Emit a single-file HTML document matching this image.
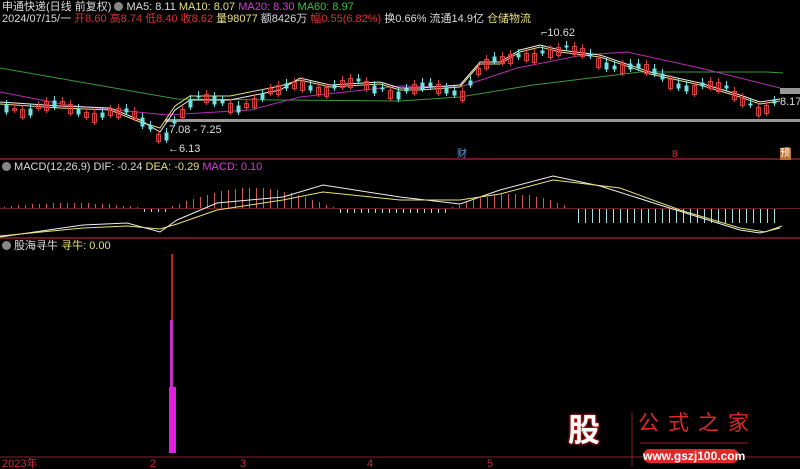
<!DOCTYPE html>
<html><head><meta charset="utf-8">
<style>
html,body{margin:0;padding:0;background:#000;width:800px;height:469px;overflow:hidden}
body{position:relative;font-family:"Liberation Sans","Noto Sans CJK SC",sans-serif;font-size:11px;color:#ccc}
.t{position:absolute;white-space:nowrap;line-height:12px}
svg{position:absolute;left:0;top:0}
line,rect{shape-rendering:crispEdges}
</style></head><body>
<svg id="s" width="800" height="469" viewBox="0 0 800 469"></svg>
<div class="t" style="left:2px;top:1px;color:#ddd">申通快递(日线 前复权) <span style="display:inline-block;width:9px;height:9px;border-radius:50%;background:#888;vertical-align:-1px"></span> MA5: 8.11 <span style="color:#e8e07a">MA10: 8.07</span> <span style="color:#d040d0">MA20: 8.30</span> <span style="color:#3ec03e">MA60: 8.97</span></div>
<div class="t" style="left:2px;top:13px;color:#ddd">2024/07/15/一 <span style="color:#e03030">开</span><span style="color:#e03030">8.60</span> <span style="color:#e03030">高8.74</span> <span style="color:#e03030">低8.40</span> <span style="color:#e03030">收8.62</span> <span style="color:#e8e07a">量98077</span> 额8426万 <span style="color:#e03030">幅0.55(6.82%)</span> 换0.66% 流通14.9亿 <span style="color:#e8e07a">仓储物流</span></div>
<div class="t" style="left:169px;top:124px;color:#ddd">7.08 - 7.25</div>
<div class="t" style="left:168px;top:143px;color:#ddd">←6.13</div>
<div class="t" style="left:541px;top:27px;color:#ddd">⌐10.62</div>
<div class="t" style="left:780px;top:96px;color:#ddd">8.17</div>
<div class="t" style="left:457px;top:149px;color:#5aa0e0;font-size:10px">财</div>
<div class="t" style="left:672px;top:149px;color:#e03030;font-size:10px">8</div>
<div class="t" style="left:780px;top:148px;width:11px;color:#fff;background:#c07030;font-size:10px">预</div>
<div class="t" style="left:2px;top:161px;color:#ddd"><span style="display:inline-block;width:9px;height:9px;border-radius:50%;background:#888;vertical-align:-1px"></span> MACD(12,26,9) DIF: -0.24 <span style="color:#e8e07a">DEA: -0.29</span> <span style="color:#d040d0">MACD: 0.10</span></div>
<div class="t" style="left:2px;top:240px;color:#ddd"><span style="display:inline-block;width:9px;height:9px;border-radius:50%;background:#888;vertical-align:-1px"></span> 股海寻牛 <span style="color:#e8e07a">寻牛: 0.00</span></div>
<div class="t" style="left:2px;top:458px;color:#c03040">2023年</div>
<div class="t" style="left:150px;top:458px;color:#c03040">2</div>
<div class="t" style="left:240px;top:458px;color:#c03040">3</div>
<div class="t" style="left:367px;top:458px;color:#c03040">4</div>
<div class="t" style="left:487px;top:458px;color:#c03040">5</div>
<div class="t" style="left:568px;top:412px;width:40px;height:36px;font-size:32px;line-height:36px;font-weight:bold;color:#fff;text-shadow:0 0 3px #e02020,0 0 2px #e02020">股</div>
<div class="t" style="left:638px;top:412px;font-size:21px;line-height:24px;color:#e02828;letter-spacing:9px">公式之家</div>
<div class="t" style="left:643px;top:449px;width:96px;height:14px;border-radius:7px;background:#e02828;color:#fff;font-size:12px;line-height:14px;font-weight:bold;text-align:center">www.gszj100.com</div>
<script>
var s=document.getElementById('s'),h='';
function L(x1,y1,x2,y2,c,w){h+='<line x1="'+x1+'" y1="'+y1+'" x2="'+x2+'" y2="'+y2+'" stroke="'+c+'" stroke-width="'+(w||1)+'"/>';}
function P(pts,c){h+='<polyline fill="none" stroke="'+c+'" stroke-width="1" points="'+pts+'"/>';}
function R(x,y,w,hh,c,f){h+='<rect x="'+x+'" y="'+y+'" width="'+w+'" height="'+hh+'" '+(f?'fill="'+c+'"':'fill="none" stroke="'+c+'"')+'/>';}
L(0,159,800,159,'#6a1820',2);L(0,238,800,238,'#6a1820',2);L(0,457,800,457,'#8a2030',1);
R(165,119,635,3,'#999',1);R(780,88,20,6,'#999',1);
P('0,68 177,99 400,101 460,97 533,85 640,72 767,72 783,73','#3a9a3a');
P('0,92 67,105 167,115 250,110 300,97 400,86 460,87 517,68 583,55 627,52 700,68 780,88','#b030b0');
var pr=[[0,102],[60,106],[110,108],[140,120],[160,132],[175,110],[190,100],[230,100],[280,90],[300,78],[330,85],[380,82],[400,88],[420,88],[460,85],[480,62],[500,62],[520,50],[540,45],[560,50],[600,55],[650,72],[700,83],[740,95],[760,102],[780,99]];
P(pr.map(function(p,i){return p[0]+','+(p[1]+(i>3&&i<9?-6:0)+2)}).join(' '),'#e8e07a');
P(pr.map(function(p){return p[0]+','+p[1]}).join(' '),'#eee');
function py(x){for(var i=1;i<pr.length;i++){if(x<=pr[i][0]){var a=pr[i-1],b=pr[i];return a[1]+(b[1]-a[1])*(x-a[0])/(b[0]-a[0]);}}return 99;}
for(var x=4;x<780;x+=8){var y=Math.round(py(x)+(Math.sin(x*0.7)*6)),up=Math.sin(x*1.3)>0,c=up?'#d04040':'#70e0e0',bh=Math.round(2+Math.abs(Math.sin(x*2.1))*7);L(x+2.5,y-4,x+2.5,y+bh+3,c);R(x+0.5,y+0.5,4,bh,c,!up);}
for(var x=4;x<780;x+=7){var v;if(x<140)v=-4*Math.sin(x/140*Math.PI)-1;else if(x<168)v=4;else if(x<335)v=-20*Math.sin((x-168)/167*Math.PI);else if(x<450)v=5;else if(x<572)v=-14*Math.sin((x-450)/122*Math.PI);else if(x<775)v=15;else v=-4;var c=v<0?'#d05858':'#a8dce4';L(x+0.5,208,x+0.5,208+Math.round(v),c);}
L(0,208.5,800,208.5,'#6a2020',1);
P('0,237 83,225 127,223 160,232 177,220 217,203 283,197 323,185 400,197 460,204 500,190 553,176 600,186 660,205 740,230 760,233 780,228','#eee');
P('0,236 83,228 127,226 160,229 177,224 217,210 283,200 323,192 400,200 460,200 500,194 553,180 620,188 680,210 740,228 765,232 782,226','#e8e07a');
R(171,254,2,66,'#c02020',1);R(170,320,3,67,'#c030c0',1);R(169,387,7,66,'#e020e0',1);
L(632,412,632,466,'#802020',1);L(640,443,748,443,'#a02020',1);
s.innerHTML=h;
</script>
</body></html>
